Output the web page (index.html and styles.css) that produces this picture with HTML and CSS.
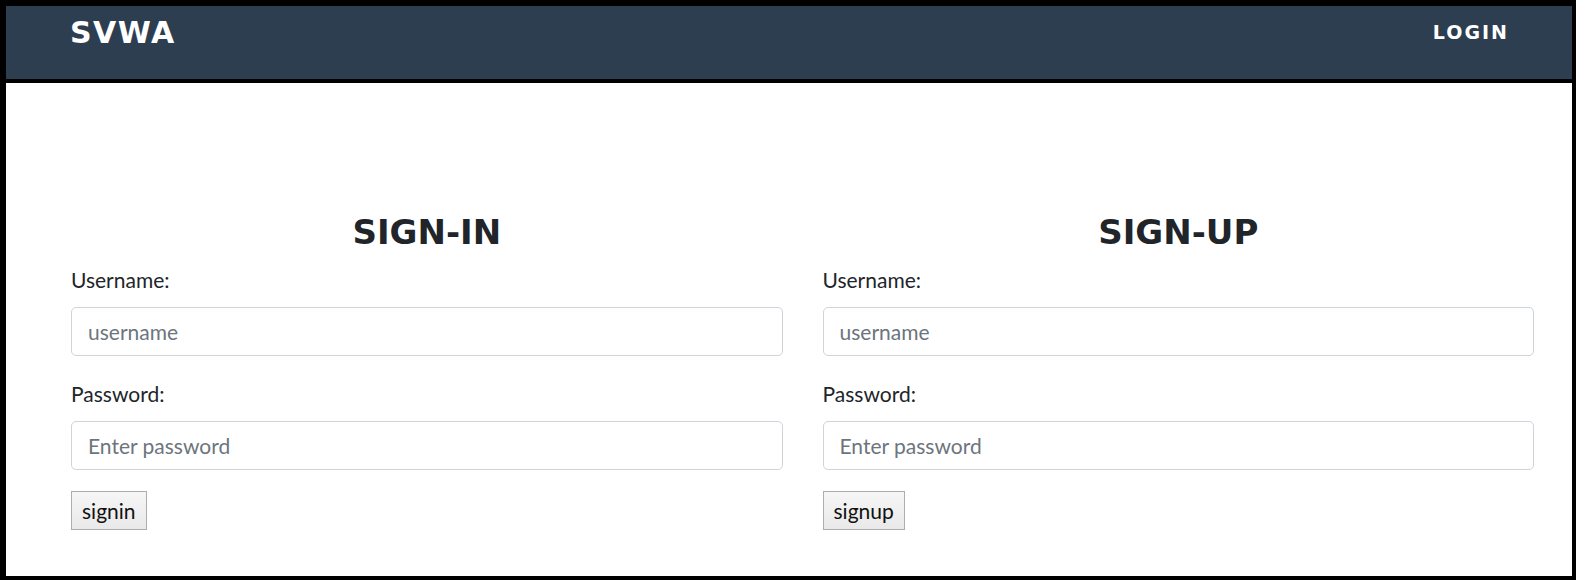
FILE: index.html
```html
<!DOCTYPE html>
<html lang="en">
<head>
<meta charset="utf-8">
<title>SVWA</title>
<link rel="stylesheet" href="styles.css">
</head>
<body>
<div class="frame">
  <nav class="navbar">
    <a class="brand" href="#">SVWA</a>
    <a class="nav-link" href="#">LOGIN</a>
  </nav>
  <main class="content">
    <section class="col">
      <h2 class="title">SIGN-IN</h2>
      <form class="form">
        <div class="group">
          <label class="label">Username:</label>
          <input class="input" type="text" placeholder="username">
        </div>
        <div class="group">
          <label class="label">Password:</label>
          <input class="input" type="password" placeholder="Enter password">
        </div>
        <button class="btn" type="button">signin</button>
      </form>
    </section>
    <section class="col">
      <h2 class="title">SIGN-UP</h2>
      <form class="form">
        <div class="group">
          <label class="label">Username:</label>
          <input class="input" type="text" placeholder="username">
        </div>
        <div class="group">
          <label class="label">Password:</label>
          <input class="input" type="password" placeholder="Enter password">
        </div>
        <button class="btn" type="button">signup</button>
      </form>
    </section>
  </main>
</div>
</body>
</html>
```

FILE: styles.css
```css
html, body {
  margin: 0;
  padding: 0;
  background: #000;
  height: 580px;
  overflow: hidden;
}
.frame {
  margin: 6px 4px 0 6px;
  height: 570px;
  background: #fff;
  font-family: Lato, "Liberation Sans", sans-serif;
  color: #212529;
}
.navbar {
  height: 73px;
  box-sizing: border-box;
  background: #2c3e50;
  padding: 12px 65px 0 64px;
  display: flex;
  justify-content: space-between;
  align-items: flex-start;
  box-shadow: 0 4px 0 #000;
  margin-bottom: 4px;
}
.brand {
  font-family: "DejaVu Sans", sans-serif;
  font-weight: 700;
  font-size: 30px;
  line-height: 1;
  letter-spacing: 1.5px;
  color: #fff;
  text-decoration: none;
}
.nav-link {
  font-family: "DejaVu Sans", sans-serif;
  font-weight: 700;
  font-size: 19px;
  line-height: 1;
  letter-spacing: 2px;
  color: #fff;
  text-decoration: none;
  margin-top: 5px;
  margin-right: -2px;
}
.content {
  display: flex;
  gap: 40px;
  padding: 129px 38px 0 65px;
}
.col {
  flex: 1;
  min-width: 0;
}
.title {
  margin: 0 0 11px;
  text-align: center;
  font-family: "DejaVu Sans", sans-serif;
  font-weight: 700;
  font-size: 34px;
  line-height: 1.2;
  color: #212529;
}
.form {
  margin: 0;
}
.group {
  margin-bottom: 22px;
}
.group + .group {
  margin-bottom: 21px;
}
.label {
  display: block;
  font-size: 21px;
  line-height: 1.5;
  margin-bottom: 12px;
}
.group + .group .label {
  margin-bottom: 11px;
}
.input {
  display: block;
  width: 100%;
  box-sizing: border-box;
  height: 49px;
  padding: 0 16px;
  font-family: Lato, "Liberation Sans", sans-serif;
  font-size: 21px;
  color: #495057;
  background: #fff;
  border: 1px solid #ced4da;
  border-radius: 5px;
  outline: none;
}
.input::placeholder {
  color: #6c757d;
  opacity: 1;
}
.btn {
  font-family: Lato, "Liberation Sans", sans-serif;
  font-size: 21px;
  line-height: 1.5;
  padding: 3px 10px;
  color: #111;
  background: linear-gradient(#f6f6f6, #e9e9e9);
  border: 1px solid #adadad;
  border-radius: 0;
  margin: 0;
}
```
